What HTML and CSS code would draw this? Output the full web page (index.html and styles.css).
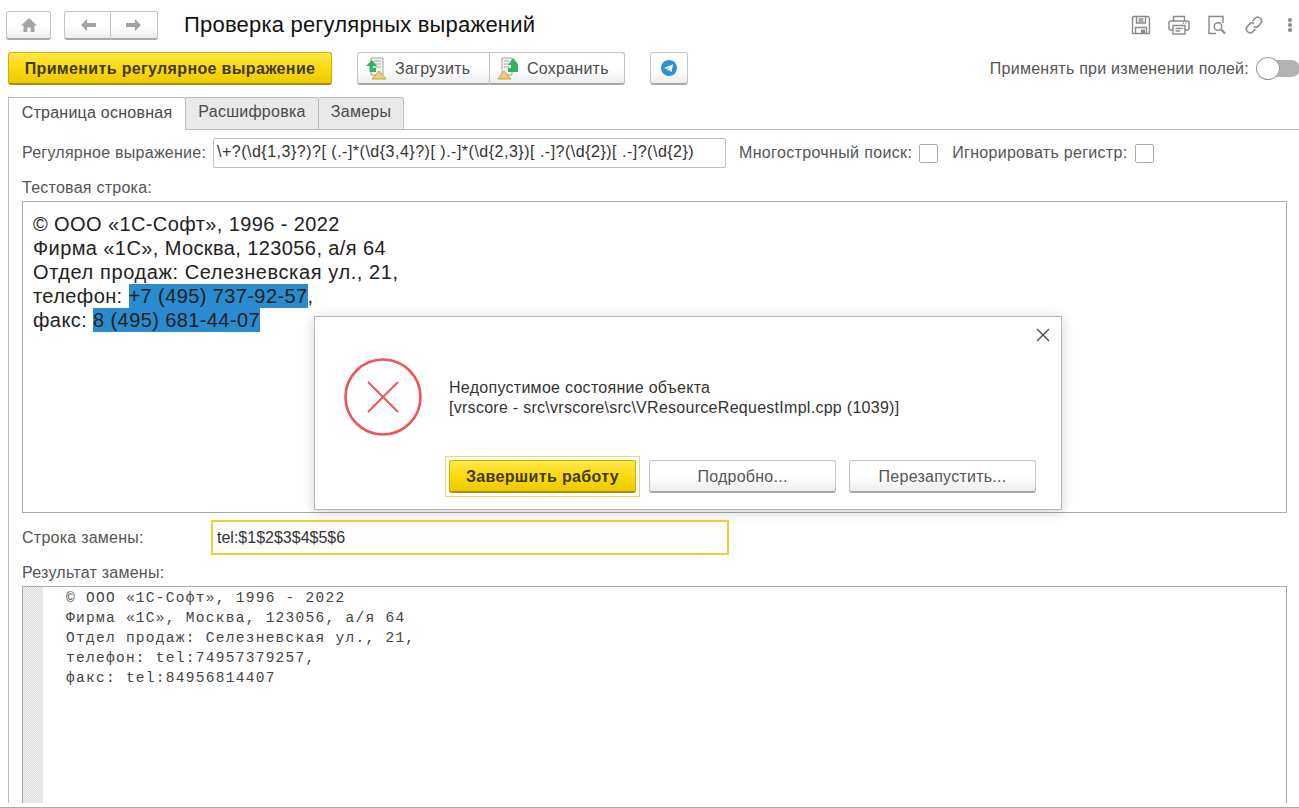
FILE: index.html
```html
<!DOCTYPE html>
<html lang="ru">
<head>
  <meta charset="utf-8">
  <title>Проверка регулярных выражений</title>
  <link rel="stylesheet" href="styles.css">
</head>
<body>

<!-- шапка формы -->
<div class="header">
  <div class="btn nav-home">
    <svg width="18" height="16" viewBox="0 0 18 16"><path d="M9 1 L1 8.5 H3.5 V15 H7.3 V10.5 H10.7 V15 H14.5 V8.5 H17 Z" fill="#a3a3a3"/></svg>
  </div>
  <div class="btn-group nav-arrows">
    <div class="btn nav-arrow">
      <svg width="18" height="14" viewBox="0 0 18 14"><path d="M8 1 L2 7 L8 13 V9 H17 V5 H8 Z" fill="#a3a3a3"/></svg>
    </div>
    <div class="btn nav-arrow">
      <svg width="18" height="14" viewBox="0 0 18 14"><path d="M10 1 L16 7 L10 13 V9 H1 V5 H10 Z" fill="#a3a3a3"/></svg>
    </div>
  </div>
  <h1 class="title">Проверка регулярных выражений</h1>
  <div class="tools">
    <svg class="tool" width="20" height="20" viewBox="0 0 20 20" fill="none" stroke="#8a8a8a" stroke-width="1.4"><path d="M2.5 1.5 H17 L18.5 3 V18.5 H1.5 V2.5 Z"/><path d="M5.5 1.5 V8 H14.5 V1.5 M7.5 4 H12.5 M7.5 6 H12.5"/><path d="M4.5 18.5 V12.5 H15.5 V18.5"/><rect x="10" y="14.5" width="4" height="4" fill="#8a8a8a" stroke="none"/></svg>
    <svg class="tool" width="22" height="20" viewBox="0 0 22 20" fill="none" stroke="#8a8a8a" stroke-width="1.4"><path d="M5.5 6 V1.5 H16.5 V6"/><path d="M5 15 H2.5 Q1 15 1 13.5 V7.5 Q1 6 2.5 6 H19.5 Q21 6 21 7.5 V13.5 Q21 15 19.5 15 H17"/><path d="M5 10.5 H17 V19 H5 Z M7.5 13.5 H14.5 M7.5 16 H12"/><path d="M15 8 H16 M17.5 8 H18.5"/></svg>
    <svg class="tool" width="20" height="20" viewBox="0 0 20 20" fill="none" stroke="#8a8a8a" stroke-width="1.4"><path d="M9 18.5 H2 V1.5 H16 V8"/><circle cx="11" cy="11.5" r="3.8"/><path d="M14 14.5 L18 18.5" stroke-width="2"/></svg>
    <svg class="tool" width="20" height="20" viewBox="0 0 20 20" fill="none" stroke="#8a8a8a" stroke-width="1.6"><path d="M8.5 6 L11.5 3 Q13.5 1 16 3 Q19 5.5 17 8 L14 11.5 Q12 13 10 11.5"/><path d="M11.5 14 L8.5 17 Q6.5 19 4 17 Q1 14.5 3 12 L6 8.5 Q8 7 10 8.5"/></svg>
    <div class="dots"><i></i><i></i><i></i></div>
  </div>
</div>

<!-- командная панель -->
<div class="toolbar">
  <div class="btn btn-yellow apply">Применить регулярное выражение</div>
  <div class="btn-group">
    <div class="btn file-btn load">
      <svg width="22" height="24" viewBox="0 0 22 24"><path d="M6 1 H18 V18 H6 Z" fill="#f4f6f4" stroke="#9aa5a0"/><path d="M9 4 H16 M9 7 H16 M9 10 H16" stroke="#9aa5a0"/><path d="M7 3 L1 9 L4.5 9 V15 H11 V11 H8 V9 H12 Z" fill="#2fb45f"/><path d="M14 14 L21 22 H7 Z" fill="#f2cf6e" stroke="#c9a13c"/></svg>
      Загрузить
    </div>
    <div class="btn file-btn save">
      <svg width="22" height="24" viewBox="0 0 22 24"><path d="M5 1 H15 V18 H5 Z" fill="#f4f6f4" stroke="#9aa5a0"/><path d="M7 4 H12 M7 7 H12 M7 10 H12" stroke="#9aa5a0"/><path d="M16 1 L21 7 V15 H11 V11 H14 V8 H11 Z" fill="#2fb45f"/><path d="M7 14 L14 22 H1 Z" fill="#f2cf6e" stroke="#c9a13c"/></svg>
      Сохранить
    </div>
  </div>
  <div class="btn telegram">
    <svg width="16" height="16" viewBox="0 0 16 16"><circle cx="8" cy="8" r="8" fill="#2b93d1"/><path d="M3 8 L12 4.2 L10.6 12 L7.8 10 L6.6 11.2 L6.4 9 L10.5 5.6 L5.4 8.8 Z" fill="#fff"/></svg>
  </div>
  <div class="switch-field">
    <span class="label">Применять при изменении полей:</span>
    <div class="switch"><div class="knob"></div></div>
  </div>
</div>

<!-- вкладки -->
<div class="tabs">
  <div class="tab active">Страница основная</div>
  <div class="tab tab-decode">Расшифровка</div>
  <div class="tab tab-time">Замеры</div>
  <div class="tabs-rest"></div>
</div>

<div class="page">
  <div class="regex-row">
    <span class="label regex-label">Регулярное выражение:</span>
    <div class="field regex-input">\+?(\d{1,3}?)?[ (.-]*(\d{3,4}?)[ ).-]*(\d{2,3})[ .-]?(\d{2})[ .-]?(\d{2})</div>
    <span class="label multi-label">Многострочный поиск:</span>
    <div class="check"></div>
    <span class="label ignore-label">Игнорировать регистр:</span>
    <div class="check"></div>
  </div>

  <div class="label test-label">Тестовая строка:</div>
  <div class="test-box">
    <div>© ООО «1С-Софт», 1996 - 2022</div>
    <div>Фирма «1С», Москва, 123056, а/я 64</div>
    <div class="wide-line">Отдел продаж: Селезневская ул., 21,</div>
    <div>телефон: <span class="match">+7 (495) 737-92-57</span>,</div>
    <div>факс: <span class="match">8 (495) 681-44-07</span></div>
  </div>

  <div class="replace-row">
    <span class="label replace-label">Строка замены:</span>
    <div class="field replace-input">tel:$1$2$3$4$5$6</div>
  </div>

  <div class="label result-label">Результат замены:</div>
  <div class="result-box">
    <div class="gutter"></div>
    <div class="result-text">© ООО «1С-Софт», 1996 - 2022
Фирма «1С», Москва, 123056, а/я 64
Отдел продаж: Селезневская ул., 21,
телефон: tel:74957379257,
факс: tel:84956814407</div>
  </div>
</div>
<div class="bottom-line"></div>

<!-- окно ошибки -->
<div class="dialog">
  <svg class="dialog-close" width="14" height="14" viewBox="0 0 14 14"><path d="M1 1 L13 13 M13 1 L1 13" stroke="#444" stroke-width="1.3"/></svg>
  <div class="dialog-body">
    <svg width="78" height="78" viewBox="0 0 78 78" fill="none" stroke="#ee5656"><circle cx="39" cy="39" r="37.5" stroke-width="2.6"/><path d="M24 24 L54 54 M54 24 L24 54" stroke-width="2"/></svg>
    <div class="dialog-text">Недопустимое состояние объекта<br>[vrscore - src\vrscore\src\VResourceRequestImpl.cpp (1039)]</div>
  </div>
  <div class="dialog-buttons">
    <div class="default-frame"><div class="btn btn-yellow finish">Завершить работу</div></div>
    <div class="btn dialog-btn first">Подробно...</div>
    <div class="btn dialog-btn">Перезапустить...</div>
  </div>
</div>

</body>
</html>
```

FILE: styles.css
```css
html, body {
  margin: 0;
  padding: 0;
  height: 808px;
  overflow: hidden;
  background-color: #fff;
}

body {
  position: relative;
  color: #4a4a4a;
  font-family: "Liberation Sans", Arial, sans-serif;
  font-size: 16px;
  letter-spacing: 0.25px;
}

/* кнопки */
.btn {
  display: flex;
  align-items: center;
  justify-content: center;
  box-sizing: border-box;
  border: 1px solid #c4c4c4;
  border-bottom: 2px solid #a9a9a9;
  border-radius: 3px;
  background: linear-gradient(#fff, #fff 55%, #ececec);
  color: #4a4a4a;
}

.btn-group {
  display: flex;
}

.btn-group .btn:first-child {
  border-radius: 3px 0 0 3px;
}

.btn-group .btn:last-child {
  border-left: 0;
  border-radius: 0 3px 3px 0;
}

.btn-yellow {
  border: 1px solid #d3b000;
  border-bottom: 2px solid #a98f10;
  background: linear-gradient(#ffe84a, #fbd90f 50%, #ecc900);
  color: #3f3a1a;
  font-weight: bold;
  letter-spacing: 0.35px;
}

/* шапка */
.header {
  display: flex;
  align-items: center;
  height: 30px;
  padding: 10px 0 0 6px;
}

.nav-home {
  width: 45px;
  height: 29px;
}

.nav-arrows {
  margin-left: 13px;
}

.nav-arrow {
  width: 47px;
  height: 29px;
}

.title {
  margin: 0 0 0 26px;
  color: #111;
  font-size: 22px;
  font-weight: normal;
  letter-spacing: 0.2px;
}

.tools {
  display: flex;
  align-items: center;
  margin-left: auto;
}

.tool {
  margin-right: 17px;
}

.dots {
  display: flex;
  flex-direction: column;
  gap: 1px;
  margin: 0 7px 0 7px;
}

.dots i {
  width: 4px;
  height: 4px;
  border-radius: 50%;
  background-color: #8a8a8a;
}

/* командная панель */
.toolbar {
  display: flex;
  align-items: center;
  height: 33px;
  margin-top: 12px;
  padding-left: 8px;
}

.apply {
  width: 324px;
  height: 33px;
  margin-right: 25px;
  padding-top: 1px;
}

.file-btn {
  justify-content: flex-start;
  gap: 8px;
  height: 33px;
  padding-top: 1px;
  padding-left: 7px;
}

.load {
  width: 133px;
}

.save {
  width: 135px;
}

.telegram {
  width: 38px;
  height: 33px;
  margin-left: 25px;
}

.switch-field {
  display: flex;
  align-items: center;
  gap: 7px;
  margin-left: auto;
  margin-right: -1px;
}

.switch {
  position: relative;
  width: 44px;
  height: 17px;
  border-radius: 9px;
  background-color: #b3b3b3;
}

.knob {
  position: absolute;
  top: -3px;
  left: 0;
  box-sizing: border-box;
  width: 24px;
  height: 23px;
  border: 1px solid #9a9a9a;
  border-radius: 50%;
  background-color: #fff;
}

/* вкладки */
.tabs {
  display: flex;
  height: 33px;
  margin-top: 12px;
  padding-left: 8px;
}

.tab {
  display: flex;
  align-items: center;
  justify-content: center;
  box-sizing: border-box;
  padding-bottom: 3px;
  border: 1px solid #bdbdbd;
  border-left: 0;
  border-radius: 0 3px 0 0;
  background-color: #e9e9e9;
}

.tab.active {
  width: 178px;
  border-left: 1px solid #bdbdbd;
  border-bottom: 0;
  background-color: #fff;
}

.tab-decode {
  width: 133px;
}

.tab-time {
  width: 85px;
}

.tabs-rest {
  flex: 1;
  border-bottom: 1px solid #bdbdbd;
}

/* страница */
.page {
  box-sizing: border-box;
  height: 673px;
  margin-left: 8px;
  padding: 8px 12px 0 13px;
  border-left: 1px solid #bdbdbd;
  overflow: hidden;
}

.bottom-line {
  margin-top: 4px;
  border-top: 1px solid #aaa;
}

.label {
  color: #555;
  white-space: nowrap;
}

.regex-row {
  display: flex;
  align-items: center;
  height: 30px;
}

.field {
  box-sizing: border-box;
  border: 1px solid #bdbdbd;
  color: #333;
}

.regex-label {
  width: 191px;
}

.regex-input {
  width: 513px;
  height: 30px;
  padding-left: 3px;
  border-radius: 2px;
  line-height: 25px;
  letter-spacing: 0.5px;
  white-space: nowrap;
  overflow: hidden;
}

.multi-label {
  margin-left: 13px;
  letter-spacing: 0.35px;
}

.check {
  box-sizing: border-box;
  width: 19px;
  height: 19px;
  margin-left: 7px;
  border: 1px solid #aaa;
  border-radius: 2px;
}

.ignore-label {
  margin-left: 14px;
  letter-spacing: 0.3px;
}

.ignore-label + .check {
  margin-left: 8px;
}

.test-label {
  height: 17px;
  margin-top: 11px;
  line-height: 17px;
}

.test-box {
  box-sizing: border-box;
  height: 312px;
  margin-top: 5px;
  padding: 10px 10px;
  border: 1px solid #aaa;
  color: #222;
  font-size: 20px;
  line-height: 24px;
  letter-spacing: 0.4px;
}

.wide-line {
  letter-spacing: 0.6px;
}

.match {
  display: inline-block;
  background-color: #2a8bcf;
}

.replace-row {
  display: flex;
  align-items: center;
  margin-top: 7px;
}

.replace-label {
  width: 189px;
}

.replace-input {
  width: 518px;
  height: 35px;
  padding-left: 4px;
  border: 2px solid #f0cd3c;
  line-height: 31px;
  letter-spacing: 0;
}

.result-label {
  height: 17px;
  margin-top: 9px;
  line-height: 17px;
}

.result-box {
  display: flex;
  box-sizing: border-box;
  height: 220px;
  margin-top: 5px;
  border: 1px solid #aaa;
  border-bottom: 0;
}

.gutter {
  width: 20px;
  background: repeating-conic-gradient(#d8d8d8 0 25%, #f5f5f5 0 50%) 0 0 / 2px 2px;
}

.result-text {
  margin-left: 23px;
  padding-top: 1px;
  color: #444;
  font-family: "Liberation Mono", "Courier New", monospace;
  font-size: 14.5px;
  line-height: 20px;
  letter-spacing: 1.28px;
  white-space: pre;
}

/* окно ошибки */
.dialog {
  position: absolute;
  left: 314px;
  top: 316px;
  box-sizing: border-box;
  width: 748px;
  height: 194px;
  border: 1px solid #b5b5b5;
  background-color: #fff;
  box-shadow: 0 2px 12px rgba(0, 0, 0, 0.18);
}

.dialog-close {
  position: absolute;
  top: 11px;
  right: 11px;
}

.dialog-body {
  display: flex;
  align-items: center;
  gap: 27px;
  padding: 41px 0 0 29px;
}

.dialog-text {
  margin-top: 1px;
  color: #333;
  line-height: 20px;
  letter-spacing: 0.28px;
}

.dialog-buttons {
  display: flex;
  align-items: center;
  margin: 20px 0 0 130px;
}

.default-frame {
  padding: 3px;
  border: 1px solid #f0d860;
}

.finish {
  width: 187px;
  height: 33px;
  padding-top: 2px;
}

.dialog-btn {
  width: 187px;
  height: 33px;
  margin-left: 13px;
  padding-top: 2px;
  color: #555;
}

.dialog-btn.first {
  margin-left: 9px;
}
```
